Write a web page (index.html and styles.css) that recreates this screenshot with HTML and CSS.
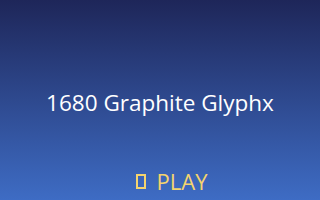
FILE: index.html
```html
<!DOCTYPE html>
<html lang="en">

<head>
    <meta charset="UTF-8">
    <meta name="viewport" content="width=device-width, initial-scale=1.0">
    <title>1680 Graphite Glyphx</title>
    <link rel="stylesheet" href="styles.css">
</head>

<body>
    <div class="screen">
        <h1 class="title">1680 Graphite Glyphx</h1>
        <button type="button" class="play-btn"><span class="play-icon"></span>PLAY</button>
    </div>
</body>

</html>
```

FILE: styles.css
```css
body {
    margin: 0;
    padding: 0;
    font-family: "Open Sans", "Noto Sans", sans-serif;
}

.screen {
    height: 200px;
    display: flex;
    flex-direction: column;
    align-items: center;
    background: linear-gradient(to bottom, #1e2659, #3e6cc4);
    color: white;
}

.title {
    flex: 1;
    display: flex;
    align-items: center;
    margin: 38px 0 0 0;
    font-size: 22.5px;
    font-weight: normal;
}

.play-btn {
    display: flex;
    align-items: center;
    margin-bottom: 4px;
    padding: 0 0 0 23px;
    border: none;
    background: none;
    color: #f5d46e;
    font-family: inherit;
    font-size: 22px;
    cursor: pointer;
}

.play-icon {
    width: 6px;
    height: 11px;
    margin-right: 11px;
    border: 2px solid #f5d46e;
}
```
